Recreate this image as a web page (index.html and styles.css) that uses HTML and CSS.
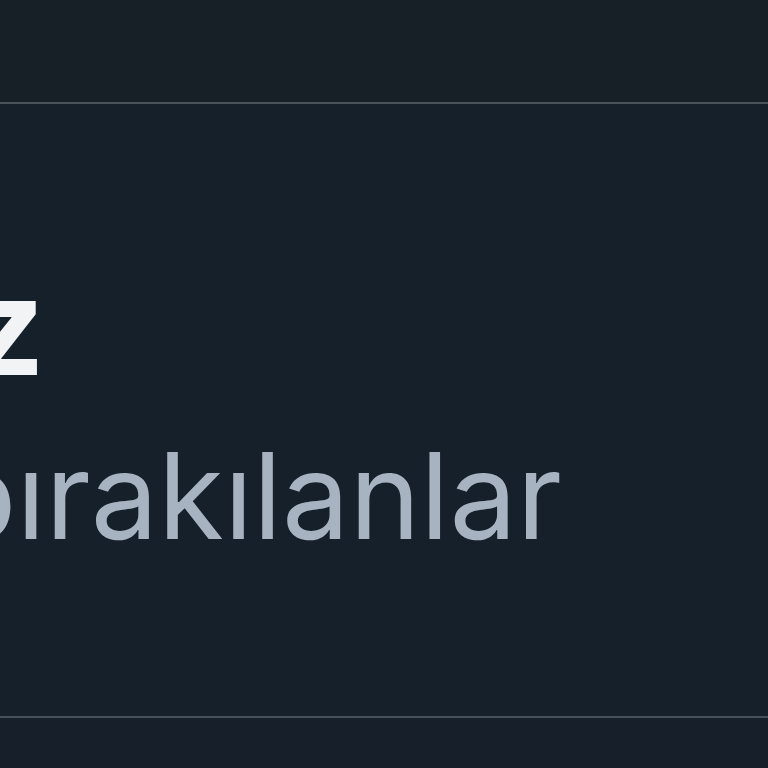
FILE: index.html
```html
<!DOCTYPE html>
<html lang="tr">
<head>
  <meta charset="UTF-8">
  <meta name="viewport" content="width=device-width, initial-scale=1.0">
  <title>Taslaklar</title>
  <link rel="stylesheet" href="styles.css">
</head>
<body>
  <!-- Top bar -->
  <header class="topbar"></header>

  <!-- Tab content -->
  <section class="tab">
    <div class="tab-title"><span>Taslaklarınız</span></div>
    <div class="tab-sub"><span>Yarıda bırakılanlar</span></div>
  </section>

  <!-- Rest -->
  <div class="rest"></div>
</body>
</html>
```

FILE: styles.css
```css
/* Reset & Base */
* { box-sizing: border-box; margin: 0; padding: 0; }
html, body { height: 100%; overflow: hidden; }
body {
  font-family: Inter, 'Noto Sans', sans-serif;
  background: #17202a;
  color: #eef1f3;
  display: flex;
  flex-direction: column;
}

/* Top bar */
.topbar {
  flex: none;
  height: 104px;
  background: #172027;
  border-bottom: 2px solid #47525a;
}

/* Tab */
.tab {
  flex: none;
  height: 614px;
  padding-top: 154px;
  border-bottom: 2px solid #47525a;
  background: #16202a;
}
.tab-title,
.tab-sub {
  display: flex;
  justify-content: flex-end;   /* text ends at the right edge, overflows left */
  white-space: nowrap;
  line-height: 1;
}
.tab-title {
  width: 45px;
  font-size: 136px;
  font-weight: 700;
  color: #f1f3f5;
}
.tab-sub {
  width: 562px;
  margin-top: 42px;
  font-size: 120px;
  color: #a7b3c0;
}

.rest { flex: 1; background: #17202a; }
```
